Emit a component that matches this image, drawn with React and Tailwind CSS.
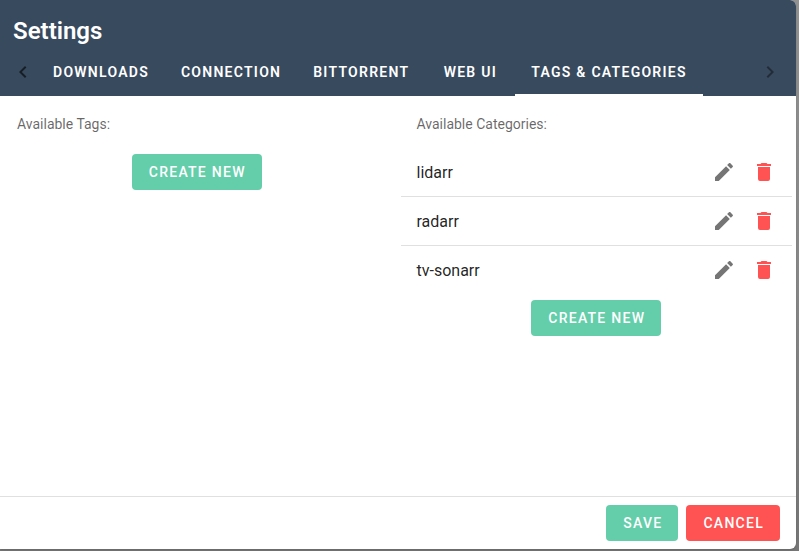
import React, { useState } from "react";

const TABS = ["Downloads", "Connection", "BitTorrent", "Web UI", "Tags & Categories"];
const CATEGORIES = ["lidarr", "radarr", "tv-sonarr"];

const ICONS = {
  left: "M15.41,16.58L10.83,12L15.41,7.41L14,6L8,12L14,18L15.41,16.58Z",
  right: "M8.59,16.58L13.17,12L8.59,7.41L10,6L16,12L10,18L8.59,16.58Z",
  pencil:
    "M20.71,7.04C21.1,6.65 21.1,6 20.71,5.63L18.37,3.29C18,2.9 17.35,2.9 16.96,3.29L15.12,5.12L18.87,8.87M3,17.25V21H6.75L17.81,9.93L14.06,6.18L3,17.25Z",
  trash: "M19,4H15.5L14.5,3H9.5L8.5,4H5V6H19M6,19A2,2 0 0,0 8,21H16A2,2 0 0,0 18,19V7H6V19Z",
};

function Icon({ name }) {
  return (
    <svg viewBox="0 0 24 24" className="size-6 shrink-0" fill="currentColor" aria-hidden="true">
      <path d={ICONS[name]} />
    </svg>
  );
}

function Button({ tone = "bg-[#64ceaa]", children }) {
  return (
    <button
      type="button"
      className={`h-9 rounded pr-4 pl-[17px] text-sm font-medium uppercase tracking-[0.09em] text-white ${tone}`}
    >
      {children}
    </button>
  );
}

function Subheader({ children }) {
  return <h2 className="flex h-12 items-center px-4 text-sm text-black/60">{children}</h2>;
}

export default function App() {
  const [active, setActive] = useState("Tags & Categories");

  return (
    <div className="flex h-screen flex-col bg-linear-to-b from-[#929292] via-[#888888] to-[#767676] pr-[3px] pb-0.5 font-['Roboto','Liberation_Sans',sans-serif]">
      <main className="flex min-h-0 flex-1 flex-col overflow-hidden rounded-r-md bg-white shadow-sm">
        <header className="bg-[#384a5e] text-white">
          <h1 className="flex h-12 items-end px-[13px] pb-px text-2xl font-semibold">Settings</h1>
          <div className="flex h-12 items-stretch">
            <button type="button" aria-label="Previous tabs" className="w-[37px] pl-[11px] text-black/60">
              <Icon name="left" />
            </button>
            <nav role="tablist" className="flex min-w-0 flex-1">
              {TABS.map((tab) => (
                <button
                  key={tab}
                  type="button"
                  role="tab"
                  aria-selected={tab === active}
                  onClick={() => setActive(tab)}
                  className={`min-w-[90px] border-b-2 px-4 pt-0.5 text-sm font-semibold whitespace-nowrap uppercase tracking-[0.09em] ${
                    tab === active ? "border-white" : "border-transparent"
                  }`}
                >
                  {tab}
                </button>
              ))}
            </nav>
            <button type="button" aria-label="Next tabs" className="px-3.5 text-black/40">
              <Icon name="right" />
            </button>
          </div>
        </header>

        <div className="grid flex-1 grid-cols-2 items-start gap-2 pt-1 pr-1 pl-px">
          <section>
            <Subheader>Available Tags:</Subheader>
            <div className="flex justify-center pt-1.5">
              <Button>Create new</Button>
            </div>
          </section>
          <section>
            <Subheader>Available Categories:</Subheader>
            <ul className="divide-y divide-black/12">
              {CATEGORIES.map((name) => (
                <li key={name} className="flex items-center gap-4 px-4 text-base text-black/87">
                  <span className="flex h-12 flex-1 items-center pt-px">{name}</span>
                  <button type="button" aria-label={`Edit ${name}`} className="text-black/54">
                    <Icon name="pencil" />
                  </button>
                  <button type="button" aria-label={`Delete ${name}`} className="text-[#ff5252]">
                    <Icon name="trash" />
                  </button>
                </li>
              ))}
            </ul>
            <div className="flex justify-center pt-1.5">
              <Button>Create new</Button>
            </div>
          </section>
        </div>

        <footer className="flex justify-end gap-2 border-t border-black/12 py-2 pr-4">
          <Button>Save</Button>
          <Button tone="bg-[#ff5252]">Cancel</Button>
        </footer>
      </main>
    </div>
  );
}
